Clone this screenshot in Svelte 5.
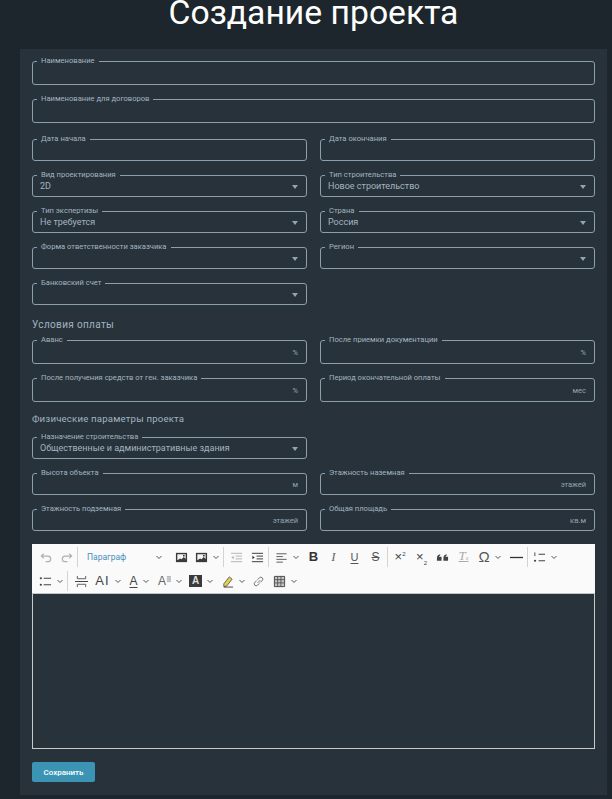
<script>
  const row1 = [
    ["undo", 20, "dim"], ["redo", 20, "dim"], "sep",
    ["para", 91], ["image", 22], ["image2", 30], "sep",
    ["outdent", 22, "dim"], ["indent", 20], "sep",
    ["align", 34],
    ["bold", 19], ["italic", 21], ["underline", 21], ["strike", 21], "sep",
    ["sup", 22], ["sub", 21], ["quote", 21], ["clear", 21, "dim"], ["omega", 32], ["hr", 20], "sep",
    ["list", 33],
  ];
  const row2 = [
    ["bullets", 30], "sep",
    ["pagebreak", 24], ["size", 31], ["color", 31], ["style", 31], ["bg", 31], ["mark", 33], ["link", 17], ["table", 37],
  ];
  const chevrons = ["image2", "align", "omega", "list", "bullets", "size", "color", "style", "bg", "mark", "table"];

  const image = '<path d="M1 2h12v10H1z" fill="#3a3a3a"/><path d="M2.500 3.500h9v5l-2-2-2.500 2.500-1.500-1-3 2z" fill="#f4f4f4"/><circle cx="9.500" cy="5" r="1" fill="#3a3a3a"/>';

  const icons = {
    undo: '<path d="M4 3 1.500 5.500 4 8M2 5.500h6.500a3 3 0 0 1 0 6H6" fill="none" stroke="currentColor" stroke-width="1.300"/>',
    redo: '<path d="M10 3l2.500 2.500L10 8M12 5.500H5.500a3 3 0 0 0 0 6H8" fill="none" stroke="currentColor" stroke-width="1.300"/>',
    image,
    image2: image,
    outdent: '<path d="M1 2.500h12M6 5.500h7M6 8.500h7M1 11.500h12" stroke="currentColor" fill="none"/><path d="M4 5v4L1.500 7z" fill="currentColor"/>',
    indent: '<path d="M1 2.500h12M6 5.500h7M6 8.500h7M1 11.500h12" stroke="#333" fill="none"/><path d="M1.500 5v4L4 7z" fill="#333"/>',
    align: '<path d="M1.500 3h11M1.500 6h7M1.500 9h11M1.500 12h7" stroke="#555" fill="none"/>',
    quote: '<path d="M1 7.500C1 5.500 2.200 4 4.500 3.500v1.300C3.700 5.100 3.300 5.600 3.200 6.200H6V10.500H1zM8 7.500C8 5.500 9.200 4 11.500 3.500v1.300C10.700 5.100 10.300 5.600 10.200 6.200H13V10.500H8z" fill="#444"/>',
    hr: '<path d="M0 7h14" stroke="#333" stroke-width="1.400"/>',
    list: '<path d="M6 3.500h7M6 10.500h7" stroke="#444" stroke-width="1.200"/><path d="M2 1.500v4" stroke="#444"/><circle cx="2.200" cy="10.500" r="1.200" fill="#444"/>',
    bullets: '<path d="M5 3.500h8M5 10.500h8" stroke="#444" stroke-width="1.200"/><circle cx="2" cy="3.500" r="1.200" fill="#444"/><circle cx="2" cy="10.500" r="1.200" fill="#444"/>',
    pagebreak: '<path d="M0 7h14" stroke="#444" stroke-width="1.100"/><path d="M2.500 1v3h9V1M2.500 13v-3h9v3" stroke="#444" fill="none" stroke-width=".9"/>',
    mark: '<path d="M3 9.500 9 2l3 2.500-6 7.500-3 .5z" fill="#e3cf55" stroke="#444" stroke-width=".8"/><path d="M3 13h10" stroke="#444"/>',
    link: '<path d="M6 8.500l3-3M5 6 3 8a2 2 0 0 0 3 3l2-2M9 8l2-2a2 2 0 0 0-3-3L6 5" stroke="#666" fill="none"/>',
    table: '<path d="M1.500 1.500h11v11h-11z" fill="#c4c4c4" stroke="#444"/><path d="M1.500 5h11M1.500 8.500h11M5 1.500v11M8.500 1.500v11" stroke="#444" fill="none" stroke-width=".8"/>',
  };
  const letters = {
    bold: "B", italic: "I", underline: "U", strike: "S", size: "AI", color: "A",
    style: "A", omega: "Ω", clear: "T", bg: "A",
  };
</script>

{#snippet field(label, opts = {})}
  <fieldset class="field" class:tall={opts.tall}>
    <legend>{label}</legend>
    <div class="inner">
      <span class="value">{opts.value ?? ""}</span>
      {#if opts.select}
        <span class="caret"></span>
      {/if}
      {#if opts.unit}
        <span class="unit">{opts.unit}</span>
      {/if}
    </div>
  </fieldset>
{/snippet}

{#snippet chevron()}
  <svg class="chev" viewBox="0 0 8 8"><path d="M1.500 3 4 5.500 6.500 3" /></svg>
{/snippet}

{#snippet tools(list)}
  {#each list as t}
    {#if t === "sep"}
      <span class="sep"></span>
    {:else}
      <span class="tool {t[2] ?? ''}" style="width: {t[1]}px">
        {#if t[0] === "para"}
          <span class="para">Параграф</span>
          {@render chevron()}
        {:else if letters[t[0]]}
          <span class="letter {t[0]}">{letters[t[0]]}{#if t[0] === "clear"}<small>x</small>{/if}</span>
          {#if t[0] === "style"}
            <svg class="style-lines" viewBox="0 0 6 8"><path d="M1 1.500h5M1 4h5M1 6.500h5" /></svg>
          {/if}
          {#if chevrons.includes(t[0])}
            {@render chevron()}
          {/if}
        {:else if t[0] === "sup" || t[0] === "sub"}
          <span class="letter script">×{#if t[0] === "sup"}<sup>2</sup>{:else}<sub>2</sub>{/if}</span>
        {:else}
          <svg class="ico" viewBox="0 0 14 14">{@html icons[t[0]]}</svg>
          {#if chevrons.includes(t[0])}
            {@render chevron()}
          {/if}
        {/if}
      </span>
    {/if}
  {/each}
{/snippet}

<div class="page">
  <h1>Создание проекта</h1>

  <form class="card">
    <div class="full">
      {@render field("Наименование", { tall: true })}
      {@render field("Наименование для договоров", { tall: true })}
    </div>

    <div class="grid">
      {@render field("Дата начала")}
      {@render field("Дата окончания")}
      {@render field("Вид проектирования", { value: "2D", select: true })}
      {@render field("Тип строительства", { value: "Новое строительство", select: true })}
      {@render field("Тип экспертизы", { value: "Не требуется", select: true })}
      {@render field("Страна", { value: "Россия", select: true })}
      {@render field("Форма ответственности заказчика", { select: true })}
      {@render field("Регион", { select: true })}
      {@render field("Банковский счет", { select: true })}
    </div>

    <h2 class="first">Условия оплаты</h2>
    <div class="grid">
      {@render field("Аванс", { unit: "%", tall: true })}
      {@render field("После приемки документации", { unit: "%", tall: true })}
      {@render field("После получения средств от ген. заказчика", { unit: "%", tall: true })}
      {@render field("Период окончательной оплаты", { unit: "мес", tall: true })}
    </div>

    <h2 class="second">Физические параметры проекта</h2>
    <div class="grid">
      {@render field("Назначение строительства", { value: "Общественные и административные здания", select: true })}
      <div></div>
      {@render field("Высота объекта", { unit: "м" })}
      {@render field("Этажность наземная", { unit: "этажей" })}
      {@render field("Этажность подземная", { unit: "этажей" })}
      {@render field("Общая площадь", { unit: "кв.м" })}
    </div>

    <div class="editor">
      <div class="toolbar">
        <div class="bar">{@render tools(row1)}</div>
        <div class="bar">{@render tools(row2)}</div>
      </div>
      <div class="content"></div>
    </div>

    <button type="button" class="save">Сохранить</button>
  </form>
</div>

<style>
  :global(body) {
    background: #1c262c;
    font-family: Roboto, "Noto Sans", sans-serif;
  }

  .page {
    width: 612px;
    height: 799px;
    overflow: hidden;
    padding: 0 5px 0 20px;
    box-sizing: border-box;
  }

  h1 {
    margin: 0;
    height: 49px;
    line-height: 26px;
    font-size: 33.700px;
    font-weight: 400;
    color: #fff;
    text-align: center;
    white-space: nowrap;
  }

  .card {
    background: #27323b;
    height: 746px;
    box-sizing: border-box;
    padding: 7px 12px 0;
  }

  .full {
    display: flex;
    flex-direction: column;
    gap: 9px;
    margin-bottom: 11px;
  }

  .grid {
    display: grid;
    grid-template-columns: 275px 275px;
    column-gap: 13px;
    row-gap: 9px;
  }

  fieldset {
    margin: 0;
    padding: 0;
    min-width: 0;
    border: 1px solid #8c9fad;
    border-radius: 3px;
    height: 27px;
    box-sizing: border-box;
  }

  fieldset.tall {
    height: 29px;
  }

  legend {
    margin-left: 4px;
    padding: 0 4px;
    font-size: 7.600px;
    line-height: 10px;
    color: #a3b4c0;
    white-space: nowrap;
  }

  .inner {
    position: relative;
    height: 100%;
    display: flex;
    align-items: center;
    justify-content: space-between;
    padding: 0 8px 0 7px;
    margin-top: -3px;
  }

  .value {
    font-size: 9px;
    color: #a3b4c0;
    padding-top: 1px;
  }

  .unit {
    font-size: 7.500px;
    color: #94a5b1;
    margin-top: 2px;
  }

  .caret {
    width: 0;
    height: 0;
    border: 3.500px solid transparent;
    border-top: 4px solid #94a5b1;
    border-bottom: 0;
    margin-top: 3px;
  }

  h2 {
    margin: 0;
    font-size: 10px;
    line-height: 12px;
    font-weight: 400;
    color: #a3b4c0;
  }

  h2.first {
    margin: 14px 0 4px;
    letter-spacing: 0.35px;
  }

  h2.second {
    margin: 11px 0 7px;
    font-size: 9.600px;
    letter-spacing: 0.2px;
  }

  .editor {
    margin-top: 13px;
  }

  .toolbar {
    background: #fafafa;
    height: 50px;
    box-sizing: border-box;
    padding-top: 1px;
    border-bottom: 1px solid #c4c4c4;
  }

  .bar {
    display: flex;
    align-items: center;
    height: 24px;
    padding-left: 4px;
    color: #444;
  }

  .tool {
    display: flex;
    align-items: center;
    justify-content: center;
    gap: 4px;
    height: 24px;
    flex: none;
  }

  .tool.dim {
    color: #b0b0b0;
  }

  .sep {
    flex: none;
    width: 1px;
    height: 20px;
    margin: 0 1px;
    background: #d4d4d4;
  }

  .ico {
    width: 13px;
    height: 13px;
    flex: none;
  }

  .style-lines {
    width: 5px;
    height: 8px;
    margin: -4px 0 0 -4px;
    fill: none;
    stroke: #555;
    stroke-width: 0.8;
  }

  .chev {
    width: 8px;
    height: 8px;
    flex: none;
    fill: none;
    stroke: #555;
    stroke-width: 1;
  }

  .para {
    color: #4a8fc0;
    font-size: 8.500px;
    flex: 1;
    padding-left: 8px;
  }

  .tool:has(.para) .chev {
    margin-right: 7px;
  }

  .letter {
    font-family: "Liberation Sans", sans-serif;
    font-size: 12px;
    line-height: 14px;
    color: #444;
  }

  .bold {
    font-weight: 700;
    font-size: 13px;
    color: #333;
  }

  .italic,
  .clear {
    font-style: italic;
    font-family: "Liberation Serif", serif;
    font-size: 13px;
    color: #666;
  }

  .clear {
    color: #aaa;
    text-decoration: underline;
    text-underline-offset: 1px;
  }

  .clear small {
    font-size: 6px;
  }

  .underline {
    text-decoration: underline;
    text-underline-offset: 2px;
    font-size: 11px;
    color: #555;
  }

  .strike {
    text-decoration: line-through;
    color: #555;
  }

  .size {
    font-size: 13px;
    letter-spacing: 1px;
    color: #444;
  }

  .color {
    font-size: 12px;
    text-decoration: underline;
    text-underline-offset: 2px;
  }

  .style {
    color: #666;
  }

  .bg {
    width: 13px;
    height: 12px;
    line-height: 12px;
    background: #3a3a3a;
    color: #ddd;
    font-size: 10px;
    font-weight: 700;
    text-align: center;
  }

  .omega {
    font-size: 15px;
    color: #555;
  }

  .script {
    font-size: 13px;
    color: #444;
  }

  .script sup,
  .script sub {
    font-size: 6px;
    line-height: 0;
  }

  .content {
    height: 155px;
    box-sizing: border-box;
    border: 1px solid #c8c8c8;
    border-top: 0;
  }

  .save {
    display: block;
    margin-top: 13px;
    width: 63px;
    height: 20px;
    padding: 0;
    border: 0;
    border-radius: 2px;
    background: #3c94b4;
    color: #fff;
    font-family: Roboto, sans-serif;
    font-size: 8px;
    font-weight: 500;
  }
</style>
